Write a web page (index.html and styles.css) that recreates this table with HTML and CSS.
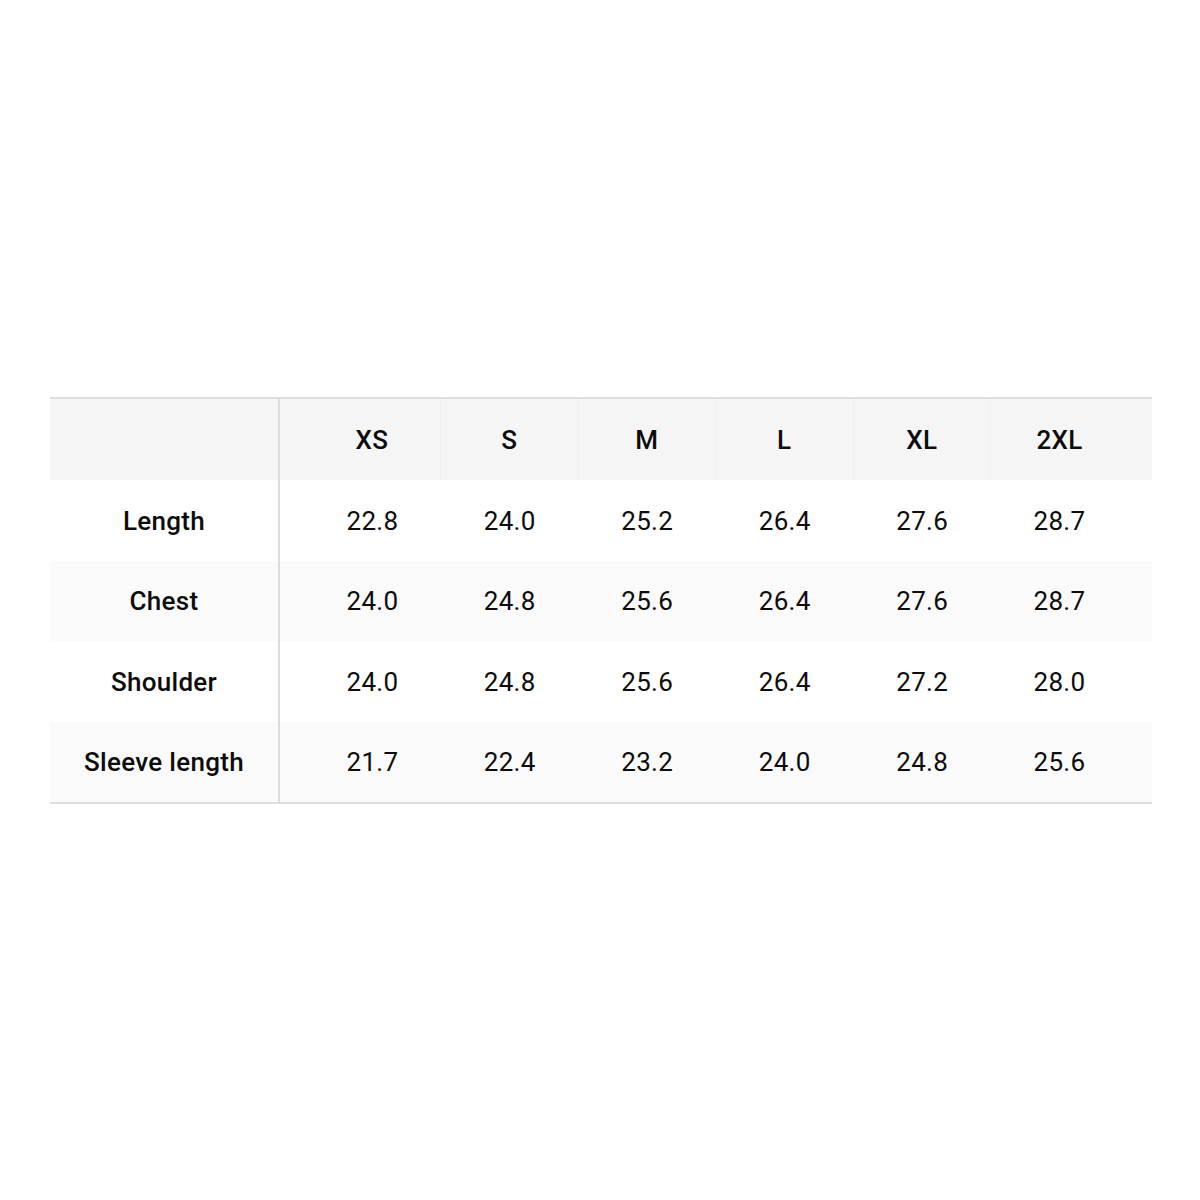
FILE: index.html
```html
<!DOCTYPE html>
<html>
<head>
<meta charset="utf-8">
<link rel="stylesheet" href="styles.css">
</head>
<body>
<div class="page">
  <div class="table">
    <div class="row head">
      <div class="cell label"></div>
      <div class="cell first">XS</div>
      <div class="cell">S</div>
      <div class="cell">M</div>
      <div class="cell">L</div>
      <div class="cell">XL</div>
      <div class="cell last">2XL</div>
    </div>
    <div class="row">
      <div class="cell label">Length</div>
      <div class="cell first">22.8</div>
      <div class="cell">24.0</div>
      <div class="cell">25.2</div>
      <div class="cell">26.4</div>
      <div class="cell">27.6</div>
      <div class="cell last">28.7</div>
    </div>
    <div class="row alt">
      <div class="cell label">Chest</div>
      <div class="cell first">24.0</div>
      <div class="cell">24.8</div>
      <div class="cell">25.6</div>
      <div class="cell">26.4</div>
      <div class="cell">27.6</div>
      <div class="cell last">28.7</div>
    </div>
    <div class="row">
      <div class="cell label">Shoulder</div>
      <div class="cell first">24.0</div>
      <div class="cell">24.8</div>
      <div class="cell">25.6</div>
      <div class="cell">26.4</div>
      <div class="cell">27.2</div>
      <div class="cell last">28.0</div>
    </div>
    <div class="row alt">
      <div class="cell label">Sleeve length</div>
      <div class="cell first">21.7</div>
      <div class="cell">22.4</div>
      <div class="cell">23.2</div>
      <div class="cell">24.0</div>
      <div class="cell">24.8</div>
      <div class="cell last">25.6</div>
    </div>
  </div>
</div>
</body>
</html>
```

FILE: styles.css
```css
html, body {
  margin: 0;
  padding: 0;
  background: #ffffff;
}

.page {
  width: 1200px;
  height: 1200px;
  display: flex;
  align-items: center;
  justify-content: center;
  padding-left: 2px;
  padding-top: 1px;
  box-sizing: border-box;
}

.table {
  width: 1102px;
  border-top: 2px solid #dedede;
  border-bottom: 2px solid #dedede;
  font-family: Roboto, "Liberation Sans", sans-serif;
  color: #0c0c0c;
}

.row {
  display: grid;
  grid-template-columns: 230px 161px repeat(4, 137.5px) 161px;
  height: 80.5px;
  background: #ffffff;
}

.row.alt {
  background: #fafafa;
}

.row.head {
  background: #f5f5f5;
  height: 81px;
}

.cell {
  display: flex;
  align-items: center;
  justify-content: center;
  font-size: 26px;
  font-weight: 400;
  letter-spacing: 0.3px;
  padding-top: 1px;
  box-sizing: border-box;
}

.head .cell {
  font-weight: 500;
  border-right: 1px solid #f0f0f0;
}

.head .cell.last {
  border-right: none;
}

.cell.label {
  font-weight: 500;
  border-right: 2px solid #dcdcdc;
}

.head .cell.label {
  border-right: 2px solid #dcdcdc;
}

.cell.first {
  padding-left: 24px;
}

.cell.last {
  padding-right: 24px;
}
```
